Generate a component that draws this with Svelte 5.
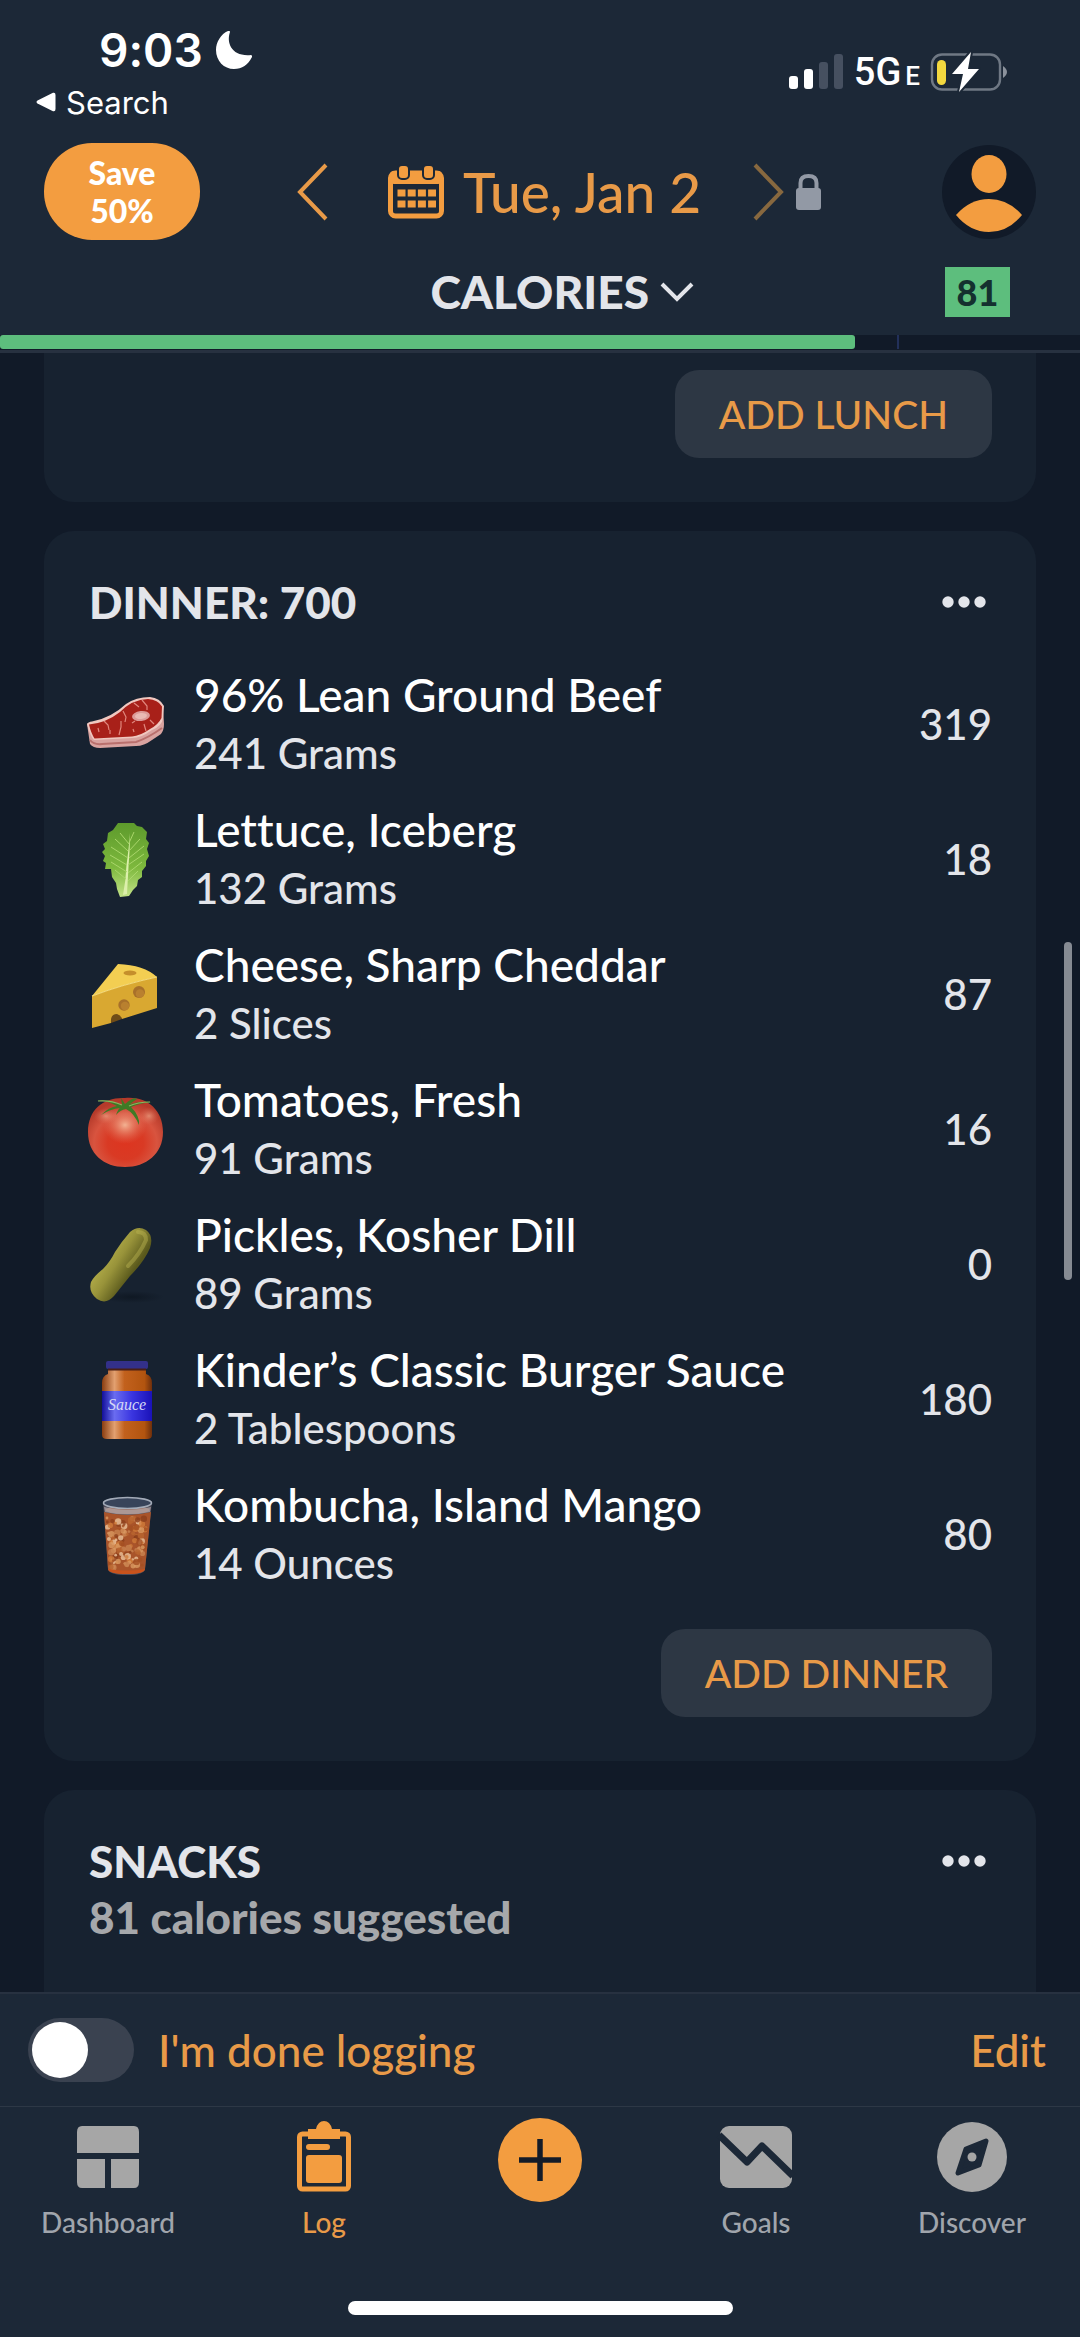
<script lang="ts">
	type Food = { icon: string; name: string; amount: string; calories: number }

	let done = $state(false)
	let metric = $state('CALORIES')
	let progress = $state(79.2)
	let target = $state(83.1)

	const dinner: Food[] = [
		{ icon: 'steak', name: '96% Lean Ground Beef', amount: '241 Grams', calories: 319 },
		{ icon: 'lettuce', name: 'Lettuce, Iceberg', amount: '132 Grams', calories: 18 },
		{ icon: 'cheese', name: 'Cheese, Sharp Cheddar', amount: '2 Slices', calories: 87 },
		{ icon: 'tomato', name: 'Tomatoes, Fresh', amount: '91 Grams', calories: 16 },
		{ icon: 'pickle', name: 'Pickles, Kosher Dill', amount: '89 Grams', calories: 0 },
		{ icon: 'jar', name: 'Kinder’s Classic Burger Sauce', amount: '2 Tablespoons', calories: 180 },
		{ icon: 'cup', name: 'Kombucha, Island Mango', amount: '14 Ounces', calories: 80 }
	]
	const total = dinner.reduce((sum, food) => sum + food.calories, 0)

	// Crushed ice in the cup
	const iceColors = ['#d99a62', '#b9652f', '#ecc49c', '#a44f22', '#c98350', '#8c3f1c', '#d07a3a']
	const ice = Array.from({ length: 130 }, (_, i) => {
		const depth = (i * 0.618) % 1
		const side = ((i * i * 0.377 + i * 0.23) % 1) * 2 - 1
		return {
			x: 41 + side * (20 - depth * 4),
			y: 24 + depth * 50,
			r: 1.4 + (i % 4) * 0.6,
			fill: iceColors[(i * 3) % 7]
		}
	})
</script>

{#snippet dots()}
	<svg width="44" height="12" viewBox="0 0 44 12" fill="#e3e5ea">
		<circle cx="6" cy="6" r="5.7" />
		<circle cx="22" cy="6" r="5.7" />
		<circle cx="38" cy="6" r="5.7" />
	</svg>
{/snippet}

{#snippet foodIcon(name: string)}
	<svg class="food-icon" viewBox="0 0 80 80" aria-hidden="true">
		{#if name === 'steak'}
			<path d="M1 40 L4 60 Q7 64 14 64 L50 62 Q58 62 66 56 L75 50 Q78 46 78 40 L77 22 Z" fill="#d9a3a0" />
			<path d="M4 56 Q8 61 16 60 L50 58 Q62 54 76 44" fill="none" stroke="#b9706d" stroke-width="2" />
			<path d="M1 40 Q2 38 6 37.500 Q25 34 40 20 Q50 13 64 13 Q74 14 78 22 L77 34 Q76 42 66 46 Q55 54 46 54 L8 56 Q4 52 1 40 Z" fill="#f0c8c0" />
			<path d="M3 40.500 Q20 39 34 28 Q46 15.500 62 15 Q72 15.500 76 22.500 L75.500 34 Q72 41 64 45 Q54 52 46 52.500 L8.500 54.500 Q5 49 3 40.500 Z" fill="#a82019" />
			<path d="M37 27 l3 6 l-1 5 M35 37 l0 6 l-2 8 M18 37 l4 4 l1 5 M56 16 l5 6 l0 4 M58 40 l2 7 M46 39 l3 -2 M64 36 l4 4 M48 19 l5 4 M12 44 l1 4 M24 46 l0 4 M47 45 l1 3" fill="none" stroke="#e0867c" stroke-width="1.200" />
			<ellipse cx="55" cy="32" rx="9" ry="5" fill="#dc9a98" transform="rotate(-6 55 32)" />
			<ellipse cx="55" cy="32" rx="6" ry="3" fill="#e9b9b4" transform="rotate(-6 55 32)" />
		{:else if name === 'lettuce'}
			<defs>
				<linearGradient id="leaf" x1="0" y1="0" x2="0" y2="1">
					<stop offset="0" stop-color="#5d9a2c" />
					<stop offset="0.6" stop-color="#7db83d" />
					<stop offset="1" stop-color="#c3e388" />
				</linearGradient>
			</defs>
			<path d="M32 4 L48 4 L51 7 L56 8 L61 13 L60 20 L63 24 L61 30 L63 37 L60 42 L60 47 L56 52 L56 58 L52 61 L51 67 L47 71 L43 77 L34 78 L31 70 L30 64 L26 58 L25 50 L19 50 L20 44 L17 42 L19 37 L16 33 L19 30 L17 25 L21 22 L22 14 L27 11 Z" fill="url(#leaf)" />
			<path d="M44 14 Q44 30 42.500 48 L41 75 L37 76 Q40 60 40.500 46 Q43 28 44 14" fill="#dcefab" />
			<path d="M43 25 L34 14 M42 32 L29 20 M42 39 L25 28 M41 46 L24 36 M41 53 L25 43 M40 60 L29 51 M43 24 L48 13 M43 32 L54 20 M43 39 L58 27 M42 46 L58 35 M42 54 L56 43 M42 62 L52 52" fill="none" stroke="#a9d66a" stroke-width="1" />
		{:else if name === 'cheese'}
			<path d="M6 42 L32 10 Q58 11 71 23 Q38 30 6 42 Z" fill="#f3ce52" />
			<path d="M6 42 Q38 30 71 23 L71 54 L36 65 Q31 60 28 62 Q25 64 25 69 L6 74 Z" fill="#d9a831" />
			<path d="M6 42 Q38 30 71 23" fill="none" stroke="#f7dc7c" stroke-width="1.200" />
			<path d="M25 69 Q24 60 31 60 Q35 61 36 65 Z" fill="#6f4c18" />
			<ellipse cx="44" cy="19" rx="6.500" ry="2.600" fill="#c58f2b" />
			<circle cx="53" cy="38" r="6" fill="#a8702a" />
			<circle cx="54" cy="39.500" r="4.300" fill="#b9802f" />
			<circle cx="38" cy="51" r="5.700" fill="#a8702a" />
			<circle cx="39" cy="52" r="4.200" fill="#b9802f" />
		{:else if name === 'tomato'}
			<defs>
				<radialGradient id="skin" cx="0.5" cy="0.65" r="0.6">
					<stop offset="0" stop-color="#dd3520" />
					<stop offset="0.4" stop-color="#d93a24" />
					<stop offset="0.7" stop-color="#d8543f" />
					<stop offset="1" stop-color="#b53a2a" />
				</radialGradient>
				<radialGradient id="shine">
					<stop offset="0" stop-color="#f3b292" />
					<stop offset="1" stop-color="#e0705a" stop-opacity="0" />
				</radialGradient>
			</defs>
			<path d="M39 9 C60 7 77 20 77 43 C77 65 60 78 39 78 C18 78 2 65 2 43 C2 20 18 8 39 9 Z" fill="url(#skin)" />
			<ellipse cx="39" cy="36" rx="22" ry="19" fill="url(#shine)" />
			<ellipse cx="20" cy="27" rx="12" ry="8" fill="url(#shine)" opacity="0.6" />
			<ellipse cx="63" cy="27" rx="10" ry="9" fill="url(#shine)" opacity="0.6" />
			<path d="M11 12 Q25 10 36 16 L35 9 L39 15 Q48 7 51 10 Q48 12 44 15 Q56 12 66 13 Q54 14 45 18 Q54 27 53 36 Q48 24 40 20 Q34 21 30 26 Q32 20 34 19 Q24 20 15 26 Q23 18 31 17 Q20 11 11 12 Z" fill="#3f7a25" />
			<path d="M12 12 Q25 11 36 16 M64 13 Q52 13 43 17" fill="none" stroke="#8fb360" stroke-width="1.200" />
		{:else if name === 'pickle'}
			<defs>
				<linearGradient id="rind" x1="0.25" y1="0.25" x2="0.7" y2="0.6">
					<stop offset="0" stop-color="#b9b34d" />
					<stop offset="0.5" stop-color="#98933a" />
					<stop offset="1" stop-color="#5a591c" />
				</linearGradient>
				<radialGradient id="shade">
					<stop offset="0" stop-color="#0f1823" />
					<stop offset="1" stop-color="#0f1823" stop-opacity="0" />
				</radialGradient>
			</defs>
			<ellipse cx="46" cy="73" rx="32" ry="6" fill="url(#shade)" />
			<path d="M44 8 Q52 1 60 6 Q68 12 64 24 Q58 38 44 52 L28 72 Q20 81 11 75 Q2 68 5 58 Q8 52 17 45 Q24 38 29 28 Q36 17 44 8 Z" fill="url(#rind)" />
			<path d="M52 8 Q60 8 60 16 Q54 30 42 42" fill="none" stroke="#c6bf58" stroke-width="4" stroke-linecap="round" opacity="0.4" />
		{:else if name === 'jar'}
			<defs>
				<linearGradient id="glass">
					<stop offset="0" stop-color="#8a3d10" />
					<stop offset="0.25" stop-color="#e2a070" />
					<stop offset="0.45" stop-color="#c2611d" />
					<stop offset="0.85" stop-color="#b2540f" />
					<stop offset="1" stop-color="#6e2f0c" />
				</linearGradient>
				<linearGradient id="band">
					<stop offset="0" stop-color="#120f9a" />
					<stop offset="0.25" stop-color="#6a6cf0" />
					<stop offset="0.6" stop-color="#3a35e0" />
					<stop offset="1" stop-color="#1a12b8" />
				</linearGradient>
			</defs>
			<path d="M22 9 H60 V15 Q66 17 66 24 V76 Q66 80 61 80 H21 Q16 80 16 76 V24 Q16 17 22 15 Z" fill="url(#glass)" />
			<rect x="20" y="2" width="42" height="8" rx="2" fill="#33308a" />
			<path d="M22 10.500 H60" stroke="#4a1f14" stroke-width="2" />
			<rect x="16" y="32" width="50" height="30" fill="url(#band)" />
			<text x="41" y="51" class="jar-label">Sauce</text>
		{:else}
			<path d="M17 7 L22 75 Q23 81 41 81 Q58 81 59 75 L66 7 Z" fill="#4f4c58" />
			<path d="M18 18 Q41 24 65 18 L59 75 Q58 80 41 80 Q23 80 22 75 Z" fill="#a9542a" />
			{#each ice as { x, y, r, fill }}
				<circle cx={x} cy={y} {r} {fill} opacity="0.8" />
			{/each}
			<path d="M22 75 Q23 80 41 80 Q58 80 59 75 Q41 78 22 75" fill="#c9531c" />
			<ellipse cx="41.500" cy="16" rx="22" ry="4" fill="#9b6f60" />
			<ellipse cx="41.500" cy="9" rx="24" ry="5.500" fill="#38445a" stroke="#a3abb8" stroke-width="1.600" />
			<path d="M18 13 Q41 19 65 13 L64 18 Q41 23 19 18 Z" fill="#b3a9ac" opacity="0.7" />
		{/if}
	</svg>
{/snippet}

<div class="app">
	<header>
		<div class="status-bar">
			<div class="status-left">
				<div class="clock">
					<span>9:03</span>
					<svg width="36" height="38" viewBox="0 0 36 38" fill="#fff">
						<path d="M14 1 C10 12 16 26 35 24 C36 24 36 25 36 26 C32 34 26 38 18 38 C8 38 0 30 0 19 C0 11 5 3 12 0 C14 0 14 0 14 1 Z" />
					</svg>
				</div>
				<a class="back-link" href="#search">
					<svg width="20" height="20" viewBox="0 0 20 20" fill="#fff">
						<path d="M1.500 8.500 L17 .800 Q19.500 0 19.500 3 V17 Q19.500 20 17 19.200 L1.500 11.500 Q-.5 10 1.500 8.500 Z" />
					</svg>
					Search
				</a>
			</div>
			<div class="status-right">
				<svg width="54" height="36" viewBox="0 0 54 36" fill="#fff">
					<rect x="0" y="22" width="9" height="13" rx="3" />
					<rect x="15" y="15" width="9" height="20" rx="3" />
					<rect x="30" y="8" width="9" height="27" rx="3" fill="#465060" />
					<rect x="45" y="0" width="9" height="35" rx="3" fill="#465060" />
				</svg>
				<span class="network">5G<small>E</small></span>
				<svg width="76" height="40" viewBox="0 0 76 40">
					<rect x="1" y="2.500" width="68" height="35" rx="10" fill="none" stroke="#6f7884" stroke-width="2.400" />
					<path d="M72 14 Q76 17 76 20 Q76 23 72 26 Z" fill="#8b929c" />
					<rect x="6" y="8" width="9" height="25" rx="4.500" fill="#f3d83f" />
					<path d="M40 0 L21 22 H32 L28 40 L48 17 H37 Z" fill="#fff" stroke="#1c2837" stroke-width="4" paint-order="stroke" stroke-linejoin="round" />
				</svg>
			</div>
		</div>

		<div class="date-row">
			<button class="save" type="button">Save<br />50%</button>
			<div class="date-nav">
				<button class="previous" type="button" aria-label="Previous day">
					<svg width="31" height="56" viewBox="0 0 31 56" fill="none" stroke="#e89a48" stroke-width="4">
						<path d="M29 1 L3 28 L29 55" />
					</svg>
				</button>
				<button class="date" type="button">
					<svg width="56" height="54" viewBox="0 0 56 54">
						<rect x="2.500" y="8" width="51" height="43" rx="5" fill="none" stroke="#f39d40" stroke-width="5" />
						<rect x="2" y="6" width="52" height="13" rx="4" fill="#f39d40" />
						<rect x="10" y="0" width="11" height="14" rx="4" fill="#f39d40" stroke="#1c2837" stroke-width="2" />
						<rect x="35" y="0" width="11" height="14" rx="4" fill="#f39d40" stroke="#1c2837" stroke-width="2" />
						<path d="M9.500 28 H48 M9.500 39 H48" stroke="#f39d40" stroke-width="7" stroke-dasharray="8 2.200" />
					</svg>
					Tue, Jan 2
				</button>
				<button class="next" type="button" aria-label="Next day">
					<svg width="31" height="56" viewBox="0 0 31 56" fill="none" stroke="#87683f" stroke-width="4">
						<path d="M2 1 L28 28 L2 55" />
					</svg>
					<svg width="25" height="36" viewBox="0 0 25 36">
						<rect x="0" y="14" width="25" height="22" rx="3" fill="#9299a5" />
						<path d="M4.500 16 V9 Q4.500 2 12.500 2 Q20.500 2 20.500 9 V16" fill="none" stroke="#9299a5" stroke-width="4" />
					</svg>
				</button>
			</div>
			<button class="profile" type="button" aria-label="Profile">
				<svg width="94" height="94" viewBox="0 0 94 94">
					<circle cx="47" cy="47" r="47" fill="#111a28" />
					<ellipse cx="47" cy="29" rx="17.500" ry="19" fill="#f39d40" />
					<path d="M14 70 Q28 54 47 54 Q66 54 80 70 Q66 87 47 87 Q28 87 14 70 Z" fill="#f39d40" />
				</svg>
			</button>
		</div>

		<div class="metric-row">
			<select bind:value={metric} aria-label="Metric">
				<option>CALORIES</option>
			</select>
			<div class="metric-side">
				<svg width="34" height="22" viewBox="0 0 34 22" fill="none" stroke="#e3e5ea" stroke-width="4">
					<path d="M2 3 L17 18 L32 3" />
				</svg>
				<span class="remaining">81</span>
			</div>
		</div>

		<div class="progress">
			<div class="fill" style="width: {progress}%"></div>
			<div class="target" style="left: {target}%"></div>
		</div>
	</header>

	<main>
		<section class="card lunch">
			<button class="add" type="button">ADD LUNCH</button>
		</section>

		<section class="card">
			<div class="card-head">
				<h2>DINNER: {total}</h2>
				<button type="button" aria-label="Dinner options">{@render dots()}</button>
			</div>
			<ul>
				{#each dinner as food}
					<li>
						{@render foodIcon(food.icon)}
						<div class="food-text">
							<div class="food-name">{food.name}</div>
							<div class="food-amount">{food.amount}</div>
						</div>
						<div class="food-calories">{food.calories}</div>
					</li>
				{/each}
			</ul>
			<button class="add" type="button">ADD DINNER</button>
		</section>

		<section class="card snacks">
			<div class="card-head">
				<h2>SNACKS</h2>
				<button type="button" aria-label="Snacks options">{@render dots()}</button>
			</div>
			<p>81 calories suggested</p>
		</section>
		<div class="scrollbar"></div>
	</main>

	<footer>
		<div class="done-row">
			<input id="done-input" type="checkbox" bind:checked={done} />
			<label for="done-input">I'm done logging</label>
			<button type="button">Edit</button>
		</div>
		<nav>
			<a href="#dashboard">
				<svg width="64" height="72" viewBox="0 0 64 72" fill="#a6a6a6">
					<path d="M6 5 H58 Q63 5 63 11 V32 H1 V11 Q1 5 6 5 Z" />
					<path d="M1 38 H29 V67 H6 Q1 67 1 61 Z" />
					<path d="M35 38 H63 V61 Q63 67 58 67 H35 Z" />
				</svg>
				Dashboard
			</a>
			<a class="active" href="#log">
				<svg width="56" height="72" viewBox="0 0 56 72">
					<rect x="3.500" y="13" width="49" height="55" rx="3" fill="none" stroke="#f39d40" stroke-width="5" />
					<path d="M12 8 H20 Q22 0 28 0 Q34 0 36 8 H44 V18 H12 Z" fill="#f39d40" />
					<rect x="10" y="23" width="24" height="6" rx="3" fill="#f39d40" />
					<rect x="10" y="34" width="36" height="28" rx="3" fill="#f39d40" />
				</svg>
				Log
			</a>
			<button class="plus" type="button" aria-label="Add food">
				<svg width="84" height="84" viewBox="0 0 84 84">
					<circle cx="42" cy="42" r="42" fill="#f39d40" />
					<path d="M42 21 V63 M21 42 H63" stroke="#141c28" stroke-width="5.500" />
				</svg>
			</button>
			<a href="#goals">
				<svg width="72" height="72" viewBox="0 0 72 72">
					<rect x="0" y="5" width="72" height="62" rx="9" fill="#a6a6a6" />
					<path d="M-1 14 L27 41 L42 25 L73 55" fill="none" stroke="#1c2837" stroke-width="7" stroke-linejoin="round" />
				</svg>
				Goals
			</a>
			<a href="#discover">
				<svg width="70" height="72" viewBox="0 0 70 72">
					<circle cx="35" cy="36" r="35" fill="#a6a6a6" />
					<path d="M29 28 L49 20 L42 44 L21 52 Z" fill="#1c2837" stroke="#1c2837" stroke-width="5" stroke-linejoin="round" />
					<circle cx="35" cy="36" r="4.500" fill="#a6a6a6" />
				</svg>
				Discover
			</a>
		</nav>
		<div class="home-bar"></div>
	</footer>
</div>

<style>
	:global(body) {
		background: #111a28;
	}
	.app {
		display: flex;
		flex-direction: column;
		min-height: 100vh;
		color: #e3e5ea;
		font-family: Lato, 'Open Sans', sans-serif;
		font-weight: 500;
		font-variant-ligatures: none;
	}
	button {
		display: flex;
		align-items: center;
		padding: 0;
		border: none;
		background: none;
		color: #e89a48;
		font-family: inherit;
		font-weight: inherit;
		cursor: pointer;
	}
	svg {
		display: block;
		flex: none;
		overflow: visible;
	}
	header,
	footer {
		background: #1c2837;
	}
	header {
		border-bottom: 3px solid #273140;
	}
	.status-bar {
		display: flex;
		justify-content: space-between;
		padding: 20px 73px 0 36px;
		height: 123px;
		color: #fff;
		font-family: Inter, 'Liberation Sans', sans-serif;
	}
	.clock {
		display: flex;
		align-items: center;
		gap: 13px;
		padding-left: 63px;
		height: 60px;
		font-size: 46px;
		font-weight: 600;
	}
	.back-link {
		display: flex;
		align-items: center;
		gap: 10px;
		height: 44px;
		color: #fff;
		font-size: 31px;
		font-weight: 400;
		text-decoration: none;
	}
	.status-right {
		display: flex;
		align-items: center;
		gap: 11px;
		height: 104px;
	}
	.network {
		font-family: Roboto, sans-serif;
		font-size: 38px;
	}
	.network small {
		margin-left: 4px;
		font-size: 26px;
	}
	.date-row {
		display: flex;
		align-items: center;
		justify-content: space-between;
		padding: 0 44px;
	}
	.save {
		justify-content: center;
		width: 156px;
		height: 97px;
		border-radius: 48px;
		background: #f39d40;
		color: #fff;
		font-size: 32px;
		font-weight: 900;
		line-height: 38px;
	}
	.date-nav {
		display: flex;
		align-items: center;
		gap: 52px;
		padding-right: 24px;
	}
	.date {
		gap: 19px;
		padding-left: 8px;
		font-size: 55px;
		line-height: 60px;
	}
	.next {
		gap: 12px;
	}
	.metric-row {
		display: grid;
		grid-template-columns: 1fr auto 1fr;
		align-items: center;
		padding: 27px 70px 18px;
	}
	select {
		grid-column: 2;
		appearance: none;
		height: 50px;
		padding: 0;
		border: none;
		background: none;
		color: #e3e5ea;
		font-family: inherit;
		font-size: 46px;
		font-weight: 900;
		line-height: 50px;
	}
	.metric-side {
		display: flex;
		align-items: center;
		justify-content: space-between;
		padding-left: 10px;
	}
	.remaining {
		width: 65px;
		background: #5dbe7d;
		color: #14302f;
		font-size: 36px;
		font-weight: 900;
		line-height: 50px;
		text-align: center;
	}
	.progress {
		position: relative;
		height: 15px;
		background: #111a28;
	}
	.fill {
		height: 14px;
		border-radius: 3px;
		background: #5dbe7d;
	}
	.target {
		position: absolute;
		top: 0;
		width: 2px;
		height: 14px;
		background: #22305a;
	}
	main {
		display: flex;
		flex: 1;
		flex-direction: column;
		gap: 29px;
		position: relative;
		padding: 0 44px;
	}
	.card {
		padding: 43px 44px 44px 45px;
		border-radius: 30px;
		background: #172230;
	}
	.lunch {
		padding-top: 17px;
		border-radius: 0 0 30px 30px;
	}
	.snacks {
		flex: 1;
		padding-bottom: 0;
		border-radius: 30px 30px 0 0;
	}
	.card-head {
		display: flex;
		align-items: center;
		justify-content: space-between;
		padding-right: 6px;
	}
	h2,
	p {
		margin: 0;
		font-size: 44px;
		font-weight: 900;
		line-height: 56px;
	}
	p {
		color: #a6a8ab;
	}
	ul {
		margin: 0;
		padding: 26px 0 28px;
		list-style: none;
	}
	li {
		display: flex;
		align-items: center;
		height: 135px;
	}
	.food-icon {
		width: 80px;
		height: 80px;
		margin: 0 28px 0 -3px;
	}
	.jar-label {
		fill: #d5d8f5;
		font-family: 'Liberation Serif', serif;
		font-size: 16px;
		font-style: italic;
		text-anchor: middle;
	}
	.food-text {
		flex: 1;
		line-height: 58px;
	}
	.food-name {
		color: #fff;
		font-size: 46px;
	}
	.food-amount {
		font-size: 42px;
	}
	.food-calories {
		font-size: 42px;
	}
	.add {
		margin-left: auto;
		padding: 0 44px;
		height: 88px;
		border-radius: 24px;
		background: #2d3744;
		font-size: 39px;
	}
	.scrollbar {
		position: absolute;
		top: 589px;
		right: 8px;
		width: 8px;
		height: 338px;
		border-radius: 4px;
		background: #868b93;
	}
	footer {
		border-top: 2px solid #273140;
	}
	.done-row {
		display: flex;
		align-items: center;
		gap: 24px;
		padding: 0 34px 0 28px;
		height: 112px;
		border-bottom: 1px solid #2d3846;
		color: #e89a48;
		font-size: 44px;
	}
	.done-row button {
		margin-left: auto;
		font-size: 44px;
	}
	input {
		appearance: none;
		display: flex;
		width: 106px;
		height: 64px;
		margin: 0;
		padding: 4px;
		box-sizing: border-box;
		border-radius: 32px;
		background: #3a4250;
	}
	input::before {
		width: 56px;
		height: 56px;
		border-radius: 50%;
		background: #fff;
		content: '';
	}
	input:checked {
		justify-content: flex-end;
		background: #5dbe7d;
	}
	nav {
		display: grid;
		grid-template-columns: repeat(5, 1fr);
		align-items: start;
		padding-top: 14px;
		height: 180px;
	}
	nav a {
		display: flex;
		flex-direction: column;
		align-items: center;
		gap: 11px;
		color: #a0a5ac;
		font-size: 28px;
		line-height: 36px;
		text-decoration: none;
	}
	nav .active {
		color: #e89a48;
	}
	.plus {
		justify-content: center;
		margin-top: -3px;
	}
	.home-bar {
		width: 385px;
		height: 14px;
		margin: 0 auto 22px;
		border-radius: 7px;
		background: #fff;
	}
</style>
